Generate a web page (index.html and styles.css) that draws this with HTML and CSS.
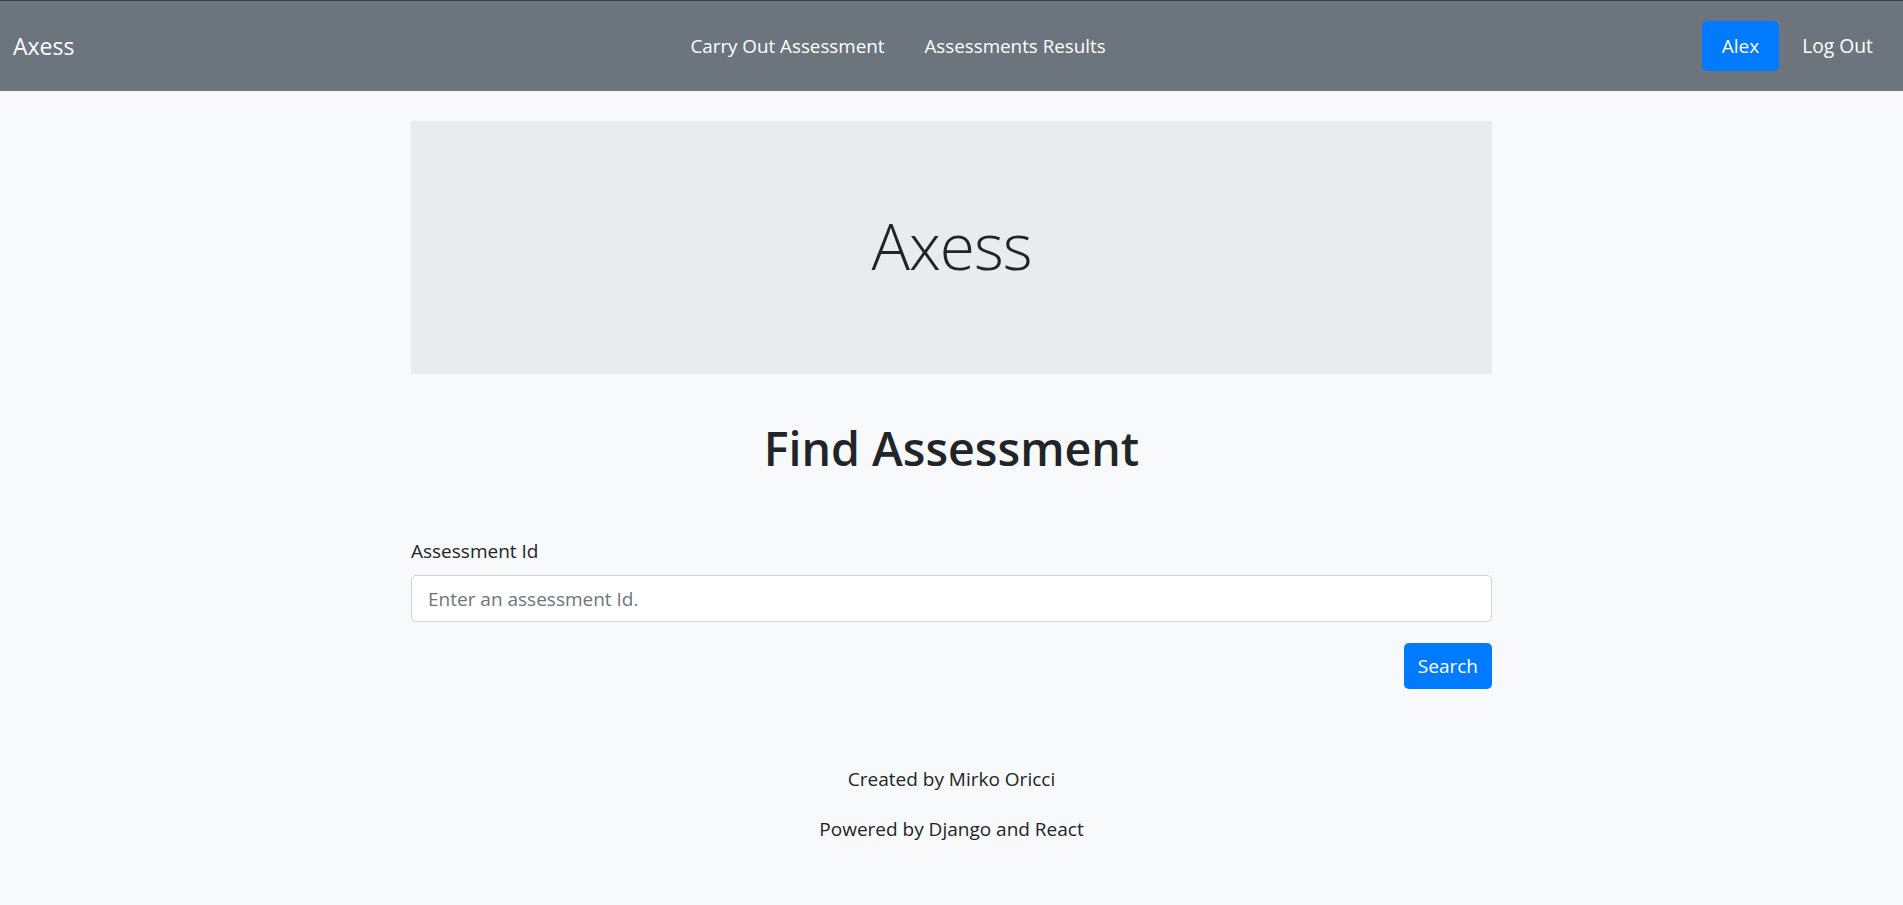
FILE: index.html
```html
<!DOCTYPE html>
<html lang="en">
<head>
<meta charset="utf-8">
<title>Axess</title>
<link rel="stylesheet" href="styles.css">
</head>
<body>
<header class="navbar">
  <a class="brand" href="#">Axess</a>
  <nav class="nav-center">
    <a class="nav-link" href="#">Carry Out Assessment</a>
    <a class="nav-link" href="#">Assessments Results</a>
  </nav>
  <div class="nav-right">
    <a class="btn btn-user" href="#">Alex</a>
    <a class="nav-link logout" href="#">Log Out</a>
  </div>
</header>
<main class="container">
  <section class="jumbotron">
    <h1 class="display">Axess</h1>
  </section>
  <h2 class="page-title">Find Assessment</h2>
  <form class="find-form">
    <label class="form-label" for="aid">Assessment Id</label>
    <input class="form-control" id="aid" type="text" placeholder="Enter an assessment Id.">
    <div class="form-actions">
      <button class="btn btn-primary" type="button">Search</button>
    </div>
  </form>
  <footer class="footer">
    <p>Created by Mirko Oricci</p>
    <p>Powered by Django and React</p>
  </footer>
</main>
</body>
</html>
```
FILE: styles.css
```css
* { box-sizing: border-box; }
html, body { margin: 0; padding: 0; }
body {
  background: #f8f9fa;
  color: #212529;
  font-family: "Open Sans", "Liberation Sans", sans-serif;
  font-size: 19px;
  line-height: 30px;
}
a { text-decoration: none; }

.navbar {
  display: flex;
  align-items: center;
  height: 91px;
  border-top: 1px solid #3b4045;
  background: #6c757d;
  padding: 0 30px 0 13px;
}
.brand {
  color: #fff;
  font-size: 23px;
  line-height: 36px;
  margin-right: 20px;
}
.nav-center {
  display: flex;
  margin: 0 auto;
}
.nav-link {
  color: #fff;
  font-size: 18.8px;
  line-height: 30px;
  padding: 0 20px;
}
.nav-right {
  display: flex;
  align-items: center;
}
.logout { padding: 0 0 0 23px; font-size: 19.3px; }

.btn {
  display: inline-block;
  border: 0;
  border-radius: 5px;
  font-family: inherit;
  font-size: 19px;
  color: #fff;
  background: #007bff;
  cursor: pointer;
}
.btn-user {
  height: 50px;
  line-height: 50px;
  padding: 0 20px;
}

.container {
  width: 1081px;
  margin: 30px auto 0;
}
.jumbotron {
  background: #e9ecef;
  padding: 83px 0 86px;
  text-align: center;
}
.display {
  margin: 0;
  font-size: 64px;
  line-height: 84px;
  font-weight: 300;
  letter-spacing: -1px;
}
.page-title {
  margin: 44px 0 58px;
  text-align: center;
  font-size: 46.5px;
  line-height: 60px;
  font-weight: 600;
}
.find-form {
  display: flex;
  flex-direction: column;
}
.form-label {
  display: block;
  margin-bottom: 9px;
}
.form-control {
  height: 47px;
  width: 100%;
  border: 1px solid #ced4da;
  border-radius: 5px;
  background: #fff;
  padding: 0 16px;
  font-family: inherit;
  font-size: 19px;
  color: #495057;
}
.form-control::placeholder { color: #6c757d; }
.form-actions {
  display: flex;
  justify-content: flex-end;
  margin-top: 21px;
}
.btn-primary {
  height: 46px;
  line-height: 46px;
  padding: 0 14px;
}
.footer {
  margin-top: 75px;
  text-align: center;
}
.footer p { margin: 0 0 20px; }
```
